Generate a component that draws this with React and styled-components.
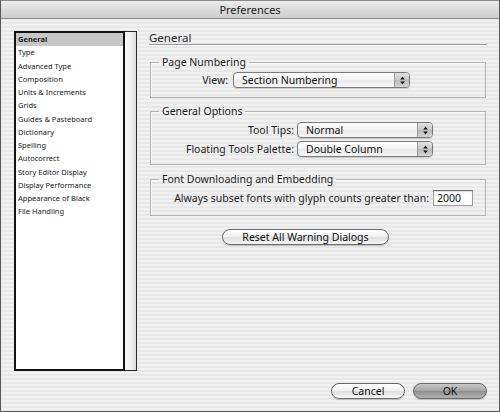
import styled, { createGlobalStyle } from 'styled-components';

const GlobalStyle = createGlobalStyle`
  html, body {
    margin: 0;
    padding: 0;
    background: #ffffff;
  }
  * {
    box-sizing: border-box;
  }
`;

const FONT = `'Noto Sans', 'DejaVu Sans', sans-serif`;

const Window = styled.div`
  width: 500px;
  height: 412px;
  display: flex;
  flex-direction: column;
  border: 1px solid #5a5a5a;
  border-top: none;
  font-family: ${FONT};
  color: #1a1a1a;
  background: repeating-linear-gradient(
    to bottom,
    #f1f1f1 0px,
    #f1f1f1 2px,
    #e8e8e8 2px,
    #e8e8e8 4px
  );
`;

const TitleBar = styled.div`
  height: 19px;
  flex: none;
  display: flex;
  align-items: center;
  justify-content: center;
  font-size: 11px;
  color: #222;
  background: linear-gradient(to bottom, #ececec, #d9d9d9 60%, #cdcdcd);
  border-top: 1px solid #8a8a8a;
  border-bottom: 1px solid #8c8c8c;
`;

const Body = styled.div`
  flex: 1;
  display: flex;
  padding: 12px 11px 0 13px;
  gap: 12px;
`;

const Sidebar = styled.div`
  width: 123px;
  height: 340px;
  display: flex;
  flex: none;
`;

const List = styled.ul`
  flex: 1;
  margin: 0;
  padding: 0;
  list-style: none;
  background: #ffffff;
  border: 2px solid #111;
`;

const Item = styled.li`
  height: 13.25px;
  line-height: 13.25px;
  padding-left: 2px;
  font-size: 7.5px;
  font-weight: ${(p) => (p.$selected ? 700 : 400)};
  color: #202020;
  background: ${(p) => (p.$selected ? '#c6c6c6' : 'transparent')};
  white-space: nowrap;
`;

const Scrollbar = styled.div`
  width: 12px;
  flex: none;
  border: 1px solid #2a2a2a;
  border-left: none;
  background: linear-gradient(to right, #fafafa, #eeeeee 60%, #dcdcdc);
`;

const Main = styled.div`
  flex: 1;
  display: flex;
  flex-direction: column;
`;

const Heading = styled.div`
  font-size: 11.5px;
  line-height: 13px;
  height: 14px;
  color: #2a2a2a;
  border-bottom: 1px solid #9a9a9a;
  box-shadow: 0 1px 0 #ffffff;
  margin-right: 1px;
`;

const Group = styled.fieldset`
  margin: ${(p) => p.$top}px 2px 0 1px;
  padding: ${(p) => p.$pad};
  border: 1px solid #b4b4b4;
  box-shadow: inset 1px 1px 0 #fafafa;
  display: flex;
  flex-direction: column;
  gap: 3px;
  min-width: 0;
`;

const Legend = styled.legend`
  margin-left: 8px;
  padding: 0 3px;
  font-size: 10.5px;
  line-height: 12px;
  color: #1c1c1c;
`;

const Row = styled.div`
  display: flex;
  align-items: center;
  height: 16px;
`;

const Label = styled.label`
  width: ${(p) => p.$width}px;
  flex: none;
  text-align: right;
  font-size: 10.5px;
  color: #1c1c1c;
  padding-right: ${(p) => p.$gap}px;
  white-space: nowrap;
`;

const Popup = styled.div`
  width: ${(p) => p.$width}px;
  height: 16px;
  flex: none;
  display: flex;
  border: 1px solid #7a7a7a;
  border-radius: 4px;
  background: linear-gradient(to bottom, #ffffff, #f3f3f3 50%, #e9e9e9 50%, #f6f6f6);
  overflow: hidden;
  box-shadow: 0 1px 1px rgba(0, 0, 0, 0.15);
`;

const PopupText = styled.span`
  flex: 1;
  padding-left: 8px;
  font-size: 10.5px;
  line-height: 14px;
  color: #111;
`;

const Arrows = styled.span`
  width: 15px;
  flex: none;
  display: flex;
  align-items: center;
  justify-content: center;
  border-left: 1px solid #9a9a9a;
  background: linear-gradient(to bottom, #e2e2e2, #c8c8c8 50%, #b9b9b9 50%, #d6d6d6);
`;

const Input = styled.div`
  width: 40px;
  height: 16px;
  margin-left: 4px;
  flex: none;
  background: #ffffff;
  border: 1px solid #9c9c9c;
  border-top-color: #6e6e6e;
  box-shadow: inset 0 1px 1px rgba(0, 0, 0, 0.15);
  font-size: 10.5px;
  line-height: 14px;
  padding-left: 3px;
  color: #111;
`;

const ResetRow = styled.div`
  display: flex;
  margin-top: 13px;
  padding-left: 73px;
`;

const Button = styled.button`
  width: ${(p) => p.$width}px;
  height: 16px;
  padding: 0;
  border: 1px solid #6a6a6a;
  border-radius: 8px;
  font-family: ${FONT};
  font-size: 10.5px;
  line-height: 13px;
  color: #111;
  background: ${(p) =>
    p.$default
      ? 'linear-gradient(to bottom, #c9c9c9, #a3a3a3 50%, #8e8e8e 50%, #b4b4b4)'
      : 'linear-gradient(to bottom, #ffffff, #efefef 50%, #dedede 50%, #f5f5f5)'};
  box-shadow: 0 1px 1px rgba(0, 0, 0, 0.2);
`;

const Footer = styled.div`
  flex: none;
  display: flex;
  justify-content: flex-end;
  gap: 8px;
  padding: 12px 12px 12px 0;
`;

const items = [
  'General',
  'Type',
  'Advanced Type',
  'Composition',
  'Units & Increments',
  'Grids',
  'Guides & Pasteboard',
  'Dictionary',
  'Spelling',
  'Autocorrect',
  'Story Editor Display',
  'Display Performance',
  'Appearance of Black',
  'File Handling',
];

function UpDown() {
  return (
    <svg width="5" height="9" viewBox="0 0 5 9">
      <path d="M2.5 0.5 L4.8 3.5 L0.2 3.5 Z" fill="#111" />
      <path d="M2.5 8.5 L4.8 5.5 L0.2 5.5 Z" fill="#111" />
    </svg>
  );
}

function Select({ width, value }) {
  return (
    <Popup $width={width}>
      <PopupText>{value}</PopupText>
      <Arrows>
        <UpDown />
      </Arrows>
    </Popup>
  );
}

export default function App() {
  return (
    <>
      <GlobalStyle />
      <Window>
        <TitleBar>Preferences</TitleBar>
        <Body>
          <Sidebar>
            <List>
              {items.map((it, i) => (
                <Item key={it} $selected={i === 0}>
                  {it}
                </Item>
              ))}
            </List>
            <Scrollbar />
          </Sidebar>
          <Main>
            <Heading>General</Heading>

            <Group $top={11} $pad="4px 0 9px">
              <Legend>Page Numbering</Legend>
              <Row>
                <Label $width={82} $gap={5}>View:</Label>
                <Select width={177} value="Section Numbering" />
              </Row>
            </Group>

            <Group $top={7} $pad="5px 0 7px">
              <Legend>General Options</Legend>
              <Row>
                <Label $width={146} $gap={3}>Tool Tips:</Label>
                <Select width={136} value="Normal" />
              </Row>
              <Row>
                <Label $width={146} $gap={3}>Floating Tools Palette:</Label>
                <Select width={136} value="Double Column" />
              </Row>
            </Group>

            <Group $top={8} $pad="5px 0 9px">
              <Legend>Font Downloading and Embedding</Legend>
              <Row>
                <Label $width={278} $gap={0}>Always subset fonts with glyph counts greater than:</Label>
                <Input>2000</Input>
              </Row>
            </Group>

            <ResetRow>
              <Button $width={167}>Reset All Warning Dialogs</Button>
            </ResetRow>
          </Main>
        </Body>
        <Footer>
          <Button $width={74}>Cancel</Button>
          <Button $width={74} $default>OK</Button>
        </Footer>
      </Window>
    </>
  );
}
